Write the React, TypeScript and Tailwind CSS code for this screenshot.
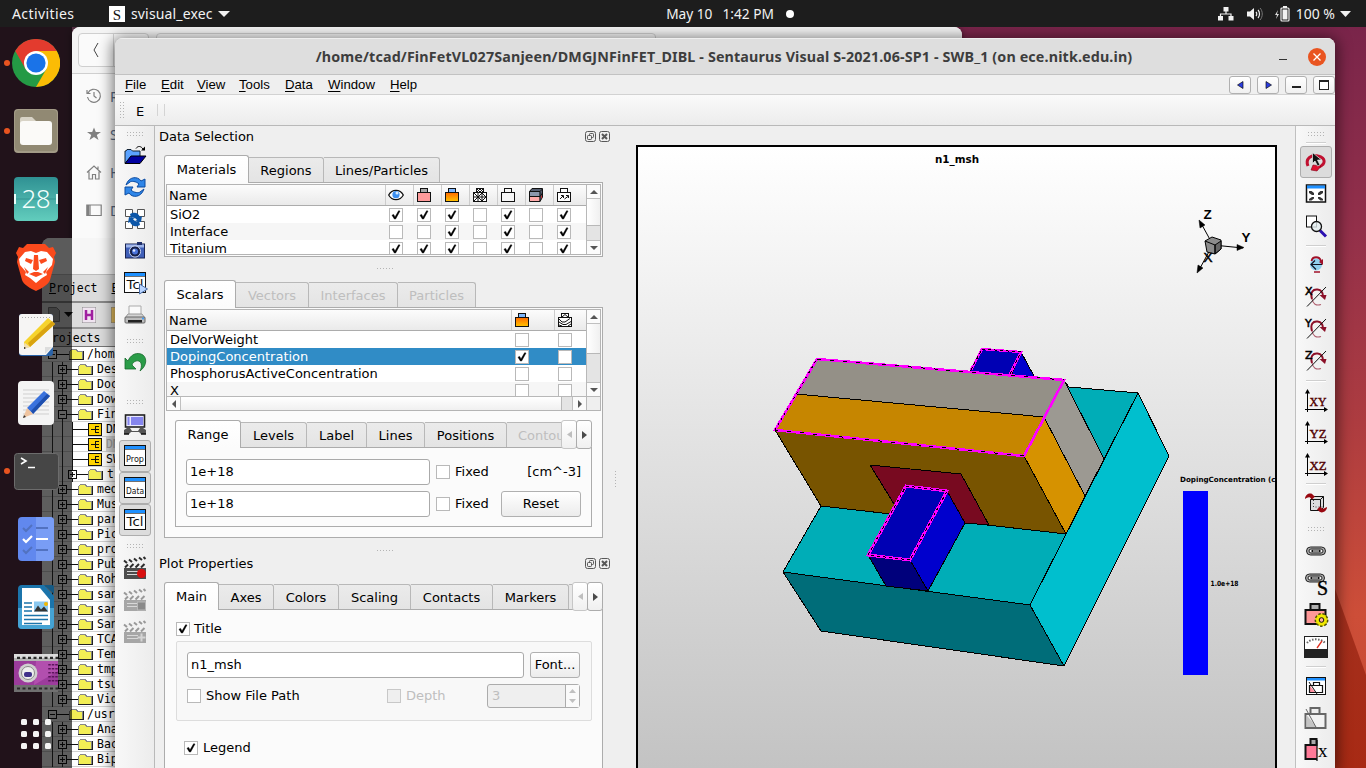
import React from "react";

type Kids = { children?: React.ReactNode };

/* ---------- shared widgets ---------- */

function Dots({ cols = 9, rows = 3 }: { cols?: number; rows?: number }) {
  const items: React.ReactNode[] = [];
  for (let r = 0; r < rows; r++)
    for (let c = 0; c < cols; c++)
      items.push(<rect key={r + "-" + c} x={c * 3} y={r * 3} width="1" height="1" fill="#b4b4b4" />);
  return (
    <svg width={cols * 3 - 2} height={rows * 3 - 2} className="block shrink-0" shapeRendering="crispEdges">
      {items}
    </svg>
  );
}

function Check({ on = false, disabled = false }: { on?: boolean; disabled?: boolean }) {
  return (
    <span
      className={
        "flex h-[14px] w-[14px] shrink-0 items-center justify-center border " +
        (disabled ? "border-[#c8c8c8] bg-[#efefef]" : "border-[#b9b9b9] bg-white")
      }
    >
      {on && (
        <svg width="12" height="12" viewBox="0 0 12 12" className="block">
          <path d="M2 6.2 3.6 5.4 5 8 8.6 1.8 10 2 5.6 10 4.4 10Z" fill="#000" stroke="#000" strokeWidth=".5" />
        </svg>
      )}
    </span>
  );
}

type Tab = { label: string; w: string };

function Tabs({ tabs, disabled = [], children }: { tabs: Tab[]; disabled?: string[] } & Kids) {
  return (
    <div className="relative z-10 flex h-[27px] items-start">
      {tabs.map((t, i) =>
        i === 0 ? (
          <div
            key={t.label}
            className={"flex h-[28px] shrink-0 items-center justify-center rounded-t-[3px] border border-b-0 border-[#acacac] bg-gradient-to-b from-white to-[#fbfbfb] " + t.w}
          >
            {t.label}
          </div>
        ) : (
          <div
            key={t.label}
            className={
              "mt-[2px] flex h-[25px] shrink-0 items-center justify-center overflow-hidden whitespace-nowrap rounded-tr-[3px] border border-b-0 border-l-0 border-[#b8b8b8] bg-gradient-to-b from-[#ebebeb] to-[#e4e4e4] pt-[2px] " +
              t.w +
              (disabled.includes(t.label) ? " text-[#bebebe]" : "")
            }
          >
            {t.label}
          </div>
        )
      )}
      {children}
    </div>
  );
}

function TabArrows() {
  return (
    <>
      <div className="flex h-[29px] w-[16px] shrink-0 items-center justify-center rounded-[3px] border border-[#c6c6c6] bg-gradient-to-b from-white to-[#f0f0f0]">
        <svg width="5" height="7"><path d="M5 0V7L0 3.5Z" fill="#bebebe" /></svg>
      </div>
      <div className="-ml-px flex h-[29px] w-[16px] shrink-0 items-center justify-center rounded-[3px] border border-[#acacac] bg-gradient-to-b from-white to-[#f0f0f0]">
        <svg width="5" height="8"><path d="M0 0V8L5 4Z" fill="#4a4a4a" /></svg>
      </div>
    </>
  );
}

function Field({ w, children }: { w: string } & Kids) {
  return (
    <div className={"flex h-[26px] shrink-0 items-center rounded-[3px] border border-[#aaaaaa] bg-white pl-[3px] " + w}>{children}</div>
  );
}

function Button({ w, children }: { w: string } & Kids) {
  return (
    <div className={"flex h-[26px] shrink-0 items-center justify-center rounded-[3px] border border-[#b0b0b0] bg-gradient-to-b from-white to-[#ececec] " + w}>
      {children}
    </div>
  );
}

function DockTitle({ children }: Kids) {
  return (
    <div className="flex h-[21px] shrink-0 items-center pl-[4px] pr-px">
      <span className="flex-1">{children}</span>
      <svg width="26" height="12" viewBox="0 0 26 12" fill="none" stroke="#585858">
        <rect x=".5" y=".5" width="10" height="10" rx="2" />
        <rect x="4.5" y="2.5" width="4" height="4" rx=".8" />
        <rect x="2.5" y="4.500" width="4" height="4" rx=".8" fill="#efefef" />
        <rect x="14.500" y=".5" width="10" height="10" rx="2" />
        <path d="M17 3l5 5M22 3l-5 5" strokeWidth="2" />
      </svg>
    </div>
  );
}

function Splitter({ h }: { h: string }) {
  return (
    <div className={"flex shrink-0 items-center justify-center pl-[2px] " + h}>
      <Dots cols={6} rows={1} />
    </div>
  );
}

/* ---------- material icons ---------- */

function EyeIcon() {
  return (
    <svg width="16" height="12" viewBox="0 0 16 12">
      <path d="M.7 6C4-.2 12-.2 15.300 6 12 12.200 4 12.200.7 6Z" fill="#fff" stroke="#111" strokeWidth="1.300" />
      <circle cx="8" cy="5.700" r="3.600" fill="#3c8ff0" />
      <circle cx="9" cy="4" r="1.500" fill="#d8ecff" />
    </svg>
  );
}

function Flask({ fill, top, mesh = "" }: { fill: string; top: string; mesh?: string }) {
  return (
    <svg width="16" height="16" viewBox="0 0 16 16">
      <defs>
        <linearGradient id="hot" x1="0" y1="0" x2="0" y2="1">
          <stop offset="0" stopColor="#ff6a00" />
          <stop offset="1" stopColor="#ffc400" />
        </linearGradient>
      </defs>
      <rect x="4.500" y="1.500" width="7" height="4" fill={top} stroke="#111" />
      <rect x="1.500" y="5.500" width="13" height="9" fill={fill} stroke="#111" />
      {mesh && <path d={mesh} fill="none" stroke="#111" />}
    </svg>
  );
}

const MESH = "M2 6l4 4 4-4 4 4M2 14l4-4 4 4 4-4M6 6v8M10 6v8M2 10h12M5 2l3 3 3-3M5 5l3-3 3 3";
const WAVES = "M2 7l3 3h3l5-3.500M2 10l4 2.500h3l5-3M2 13l3 1M11 14l3-2M5 5l3-2.500 3 2.500";
const ARROWS = "M4 12l3-3M5 8.500h2.500v2.500M8.500 12l4-3M10 8.500h2.500v2.500";

function SlabIcon() {
  return (
    <svg width="16" height="16" viewBox="0 0 16 16">
      <path d="M1.500 4.500 4 1.500H14.500V10L12 14.500H1.500Z" fill="#555e70" stroke="#111" />
      <path d="M1.500 4.500H12L14.500 2" fill="none" stroke="#111" />
      <rect x="2" y="5" width="9.500" height="4" fill="#8c98ad" />
      <rect x="2" y="10" width="9.500" height="4" fill="#ffabab" />
      <path d="M1.500 9.500H12L14.500 6M12 4.500v10" fill="none" stroke="#111" />
      <path d="M13 10l1-2v2l-1 2Z" fill="#e22" />
    </svg>
  );
}

/* ---------- data tables ---------- */

function VScroll({ thumb }: { thumb: string }) {
  return (
    <div className="flex w-[14px] shrink-0 flex-col border-l border-[#b8b8b8] bg-[#e4e4e4]">
      <div className="flex h-[14px] shrink-0 items-center justify-center border-b border-[#c0c0c0] bg-[#fbfbfb]">
        <svg width="8" height="4"><path d="M0 4H8L4 0Z" fill="#555" /></svg>
      </div>
      <div className={"shrink-0 border-b border-[#b8b8b8] bg-gradient-to-r from-white to-[#f0f0f0] " + thumb} />
      <div className="flex-1" />
      <div className="flex h-[14px] shrink-0 items-center justify-center border-t border-[#c0c0c0] bg-[#fbfbfb]">
        <svg width="8" height="4"><path d="M0 0H8L4 4Z" fill="#555" /></svg>
      </div>
    </div>
  );
}

const matIcons = [
  <EyeIcon />,
  <Flask fill="#ff9b9b" top="#a8a8a8" />,
  <Flask fill="url(#hot)" top="#7db7ff" />,
  <Flask fill="#fff" top="#fff" mesh={MESH} />,
  <Flask fill="#f6f6f6" top="#f6f6f6" />,
  <SlabIcon />,
  <Flask fill="#fff" top="#fff" mesh={ARROWS} />,
];

const matRows = [
  { name: "SiO2", v: [1, 1, 1, 0, 1, 0, 1] },
  { name: "Interface", v: [0, 0, 1, 0, 1, 0, 1] },
  { name: "Titanium", v: [1, 1, 1, 0, 1, 0, 1] },
];

function MaterialsTable() {
  return (
    <div className="flex h-full overflow-hidden border border-[#b4b4b4] bg-white">
      <div className="flex min-w-0 flex-1 flex-col">
        <div className="flex h-[21px] shrink-0 border-b border-[#acacac] bg-gradient-to-b from-[#fcfcfc] to-[#eaeaea]">
          <div className="flex flex-1 items-center pl-[2px] pt-[2px]">Name</div>
          {matIcons.map((ic, i) => (
            <div key={i} className="flex w-[28px] items-center border-l border-[#cccccc] pl-[2px]">
              {ic}
            </div>
          ))}
          <div className="w-[5px]" />
        </div>
        {matRows.map((r, i) => (
          <div key={r.name} className={"flex h-[17px] shrink-0 items-center " + (i % 2 ? "bg-[#f6f6f6]" : "bg-white")}>
            <div className="flex-1 pl-[3px]">{r.name}</div>
            {r.v.map((c, j) => (
              <div key={j} className="flex w-[28px] pl-[4px]">
                <Check on={!!c} />
              </div>
            ))}
            <div className="w-[5px]" />
          </div>
        ))}
      </div>
      <VScroll thumb="h-[27px]" />
    </div>
  );
}

const scalarRows = [
  { name: "DelVorWeight", bg: "bg-white", on: false },
  { name: "DopingConcentration", bg: "bg-[#308cc6] text-white", on: true },
  { name: "PhosphorusActiveConcentration", bg: "bg-white", on: false },
  { name: "X", bg: "bg-[#f6f6f6]", on: false },
];

function ScalarsTable() {
  return (
    <div className="flex h-[102px] shrink-0 flex-col border border-[#b4b4b4] bg-white">
      <div className="flex h-[86px] shrink-0">
        <div className="flex min-w-0 flex-1 flex-col overflow-hidden">
          <div className="flex h-[21px] shrink-0 border-b border-[#acacac] bg-gradient-to-b from-[#fcfcfc] to-[#eaeaea]">
            <div className="flex flex-1 items-center pl-[2px] pt-[2px]">Name</div>
            <div className="flex w-[43px] items-center border-l border-[#cccccc] pl-[2px]"><Flask fill="url(#hot)" top="#7db7ff" /></div>
            <div className="flex w-[32px] items-center border-l border-[#cccccc] pl-[2px]"><Flask fill="#fff" top="#fff" mesh={WAVES} /></div>
          </div>
          {scalarRows.map((r) => (
            <div key={r.name} className={"flex h-[17px] shrink-0 items-center " + r.bg}>
              <div className="flex-1 pl-[3px]">{r.name}</div>
              <div className="w-[43px] pl-[4px]"><Check on={r.on} /></div>
              <div className="w-[32px] pl-[4px]"><Check /></div>
            </div>
          ))}
        </div>
        <VScroll thumb="h-[30px]" />
      </div>
      <div className="flex h-[14px] shrink-0 border-t border-[#b8b8b8] bg-[#e4e4e4]">
        <div className="flex w-[14px] items-center justify-center border-r border-[#c0c0c0] bg-[#fbfbfb]">
          <svg width="4" height="8"><path d="M4 0V8L0 4Z" fill="#555" /></svg>
        </div>
        <div className="flex-1 border-r border-[#b8b8b8] bg-gradient-to-b from-white to-[#f0f0f0]" />
        <div className="w-[10px]" />
        <div className="flex w-[14px] items-center justify-center border-l border-[#c0c0c0] bg-[#fbfbfb]">
          <svg width="4" height="8"><path d="M0 0V8L4 4Z" fill="#555" /></svg>
        </div>
        <div className="w-[14px] border-l border-[#b8b8b8] bg-[#efefef]" />
      </div>
    </div>
  );
}

/* ---------- side toolbars ---------- */

function Tool({ active = false, children }: { active?: boolean } & Kids) {
  return (
    <div
      className={
        "flex h-8 w-8 shrink-0 items-center justify-center " +
        (active ? "rounded-[3px] border border-[#adadad] bg-[#dcdcdc]" : "")
      }
    >
      {children}
    </div>
  );
}

function Sep({ h }: { h: string }) {
  return (
    <div className={"flex w-full shrink-0 items-center justify-center " + h}>
      <div className="h-[2px] w-[20px] border-b border-white bg-[#cfcfcf]" />
    </div>
  );
}

function WinIcon({ label, play = false }: { label: string; play?: boolean }) {
  const long = label.length > 3;
  return (
    <svg width="26" height="24" viewBox="0 0 26 24">
      <rect x="2.500" y="1.500" width="21" height="20" fill="#fff" stroke="#111" />
      <rect x="3" y="2" width="20" height="3" fill="#1e90ff" />
      <path d="M3 5.500h20" stroke="#111" strokeWidth=".6" />
      <text
        x="13"
        y="17.500"
        textAnchor="middle"
        textLength={long ? 18 : 17}
        lengthAdjust="spacingAndGlyphs"
        fontFamily="DejaVu Sans"
        fontSize={long ? 9.5 : 12}
        fill="#111"
      >
        {label}
      </text>
      {play && <path d="M17.500 13v10l8-5Z" fill="#b8d4ff" stroke="#4a6ea8" />}
    </svg>
  );
}

function Clapper({ dim = false, kind }: { dim?: boolean; kind: string }) {
  const dark = dim ? "#999999" : "#2c2c2c";
  return (
    <svg width="24" height="24" viewBox="0 0 24 24">
      <path d="M1 4 22 0v5L2 9Z" fill="#f2f2f2" />
      <path d="M1 4.500l3 2.500M6 3.500l3 2.500M11 2.500l3 2.500M16 1.500l3 2.500M20.500 1l2 2" stroke={dark} strokeWidth="2" />
      <path d="M2 11.500l3-3M7 11.500l3.500-3.500M12.500 11.500 16 8M18 11.500 21.500 8" stroke={dark} strokeWidth="2" />
      <rect x="1" y="12" width="22" height="11" fill={dim ? "#a6a6a6" : "#4c4c4c"} />
      <path d="M4 15.500h11M4 18.500h11" stroke="#d8d8d8" />
      {kind === "rec" && <circle cx="18.500" cy="17.500" r="4.500" fill="#d90f0f" />}
      {kind === "stop" && <rect x="14.500" y="14" width="8" height="8" fill="#8a8a8a" stroke="#b8b8b8" />}
      {kind === "add" && <path d="M18.500 13.500v8M14.500 17.500h8" stroke="#d4d4d4" strokeWidth="2" />}
    </svg>
  );
}

function LeftToolbar() {
  return (
    <div className="flex w-[40px] shrink-0 flex-col items-center border-r border-[#b9b9b9] bg-gradient-to-r from-[#f8f8f8] to-[#ececec]">
      <div className="flex h-[13px] shrink-0 items-center pt-[3px]"><Dots cols={6} rows={2} /></div>
      <Tool>
        <svg width="24" height="24" viewBox="0 0 24 24">
          <path d="M2 20V8h1l1-1.500h4L9.500 8H17v5" fill="#5aa2ff" stroke="#123" />
          <path d="M2 20.500l6-7.500h15l-6 7.500Z" fill="#0000a0" stroke="#000" />
          <path d="M13 5.500c2-3 5-2.500 7 .5" fill="none" stroke="#000" />
          <path d="M22 3.500v4h-4Z" fill="#000" />
        </svg>
      </Tool>
      <Tool>
        <svg width="24" height="24" viewBox="0 0 24 24">
          <path d="M3 10C6 1 15 1 18 6l4-2v8h-8l2-3C13 6 8 6 7 7Z" fill="#2f86e8" stroke="#0b4aa0" />
          <path d="M21 14c-3 9-12 9-15 4l-4 2v-8h8l-2 3c3 3 8 3 9 2Z" fill="#2f86e8" stroke="#0b4aa0" />
        </svg>
      </Tool>
      <Tool>
        <svg width="24" height="24" viewBox="0 0 24 24">
          <path d="M2.500 2.500h7v7h-7ZM14.500 2.500h7v7h-7ZM2.500 14.500h7v7h-7ZM14.500 14.500h7v7h-7Z" fill="#fff" stroke="#555" />
          <path d="M7 7c5-3 9 0 10 3l2-1-1 6-6-1 2-1c-1-2-4-3-6-2Z" fill="#0c56a8" />
          <path d="M17 18c-5 3-9 0-10-3l-2 1 1-6 6 1-2 1c1 2 4 3 6 2Z" fill="#0c56a8" />
        </svg>
      </Tool>
      <Tool>
        <svg width="24" height="24" viewBox="0 0 24 24">
          <rect x="2.500" y="5" width="19" height="14" fill="#3f5fb8" stroke="#1a2450" />
          <rect x="3" y="5.500" width="18" height="3" fill="#9db4ea" />
          <rect x="14" y="3" width="5" height="3" fill="#20306a" />
          <circle cx="12" cy="12.500" r="5.600" fill="#16204a" stroke="#c8d4f4" />
          <circle cx="12" cy="12.500" r="3" fill="#4a72d8" />
          <circle cx="11" cy="11.500" r="1.300" fill="#dfe8ff" />
        </svg>
      </Tool>
      <Tool><WinIcon label="Tcl" play /></Tool>
      <Tool>
        <svg width="24" height="24" viewBox="0 0 24 24">
          <path d="M6 12V3h12v9" fill="#fafafa" stroke="#aaa" />
          <path d="M5 11h14l3 4H2Z" fill="#d4d4d4" stroke="#999" />
          <rect x="2" y="14" width="20" height="6" rx="1" fill="#bcbcbc" stroke="#666" />
          <rect x="5" y="17" width="14" height="2.500" fill="#222" />
          <circle cx="20" cy="15.500" r="1" fill="#39f" />
        </svg>
      </Tool>
      <div className="flex h-[15px] shrink-0 items-center pt-[5px]"><Dots cols={6} rows={2} /></div>
      <Tool>
        <svg width="26" height="24" viewBox="0 0 26 24">
          <path d="M3 8v11h11l-4-4c1-4 7-6 9-2 1 3 0 6-1 8 8-6 7-15 1-17C13 2 8 6 6 11Z" fill="#2a9c48" stroke="#15692b" strokeWidth=".8" strokeLinejoin="round" />
        </svg>
      </Tool>
      <div className="flex h-[30px] shrink-0 items-end pb-[4px]"><Dots cols={6} rows={2} /></div>
      <Tool>
        <svg width="24" height="24" viewBox="0 0 24 24">
          <rect x="2.500" y="3" width="19" height="12" fill="#e8e8ff" stroke="#222" strokeWidth="1.600" />
          <path d="M4.500 6h2M4.500 8h2M4.500 10h2M4.500 12h2M8 6h12M8 8h12M8 10h12M8 12h12" stroke="#2222dd" />
          <path d="M1 22v-4l3-2h3l2 3h6l2-3h3l3 2v4h-5l-2-2H8l-2 2Z" fill="#555" />
          <path d="M1 22h5M18 22h5" stroke="#111" strokeWidth="1.500" />
        </svg>
      </Tool>
      <Tool active><WinIcon label="Prop" /></Tool>
      <Tool active><WinIcon label="Data" /></Tool>
      <Tool active><WinIcon label="Tcl" /></Tool>
      <div className="flex h-[16px] shrink-0 items-center pt-[4px]"><Dots cols={6} rows={2} /></div>
      <Tool><Clapper kind="rec" /></Tool>
      <Tool><Clapper kind="stop" dim /></Tool>
      <Tool><Clapper kind="add" dim /></Tool>
    </div>
  );
}

function RotAxis({ axis }: { axis: string }) {
  return (
    <svg width="24" height="24" viewBox="0 0 24 24">
      <path d="M8 14C6 7 9 4 13.500 4.500c4 .5 5.500 3 5.500 7" fill="none" stroke="#8c1028" strokeWidth="2" />
      <path d="M8 14c1 5 4 7 9 5.500" fill="none" stroke="#b06070" strokeWidth="1.200" />
      <path d="M15.500 10h7l-1.500 5Z" fill="#8c1028" />
      <path d="M3 21.500 22 2" stroke="#111" />
      <text x="1" y="9.500" fontFamily="DejaVu Sans" fontSize="11" fill="#000" stroke="#000" strokeWidth=".5">{axis}</text>
    </svg>
  );
}

function Plane({ label }: { label: string }) {
  return (
    <svg width="26" height="26" viewBox="0 0 26 26">
      <path d="M4.500 24V3M2 21.500H24" stroke="#000" fill="none" />
      <path d="M2 5.500 4.500 1 7 5.500ZM21 19l4 2.500-4 2.500Z" fill="#000" />
      <text x="6.500" y="17.500" textLength="17" lengthAdjust="spacingAndGlyphs" fontFamily="Liberation Serif" fontSize="13" fill="#500000" stroke="#500000" strokeWidth=".4">{label}</text>
    </svg>
  );
}

function ChainShape({ y }: { y: number }) {
  return (
    <g transform={"translate(0 " + y + ")"} fill="none">
      <rect x="2.500" y="2" width="19" height="8" rx="4" stroke="#222" strokeWidth="1" fill="#aaa" />
      <rect x="5" y="4" width="14" height="4" rx="2" stroke="#222" strokeWidth="1" fill="#f4f4f4" />
      <path d="M7.500 6h9" stroke="#111" strokeWidth="2.400" />
      <path d="M9 6h6" stroke="#fff" />
    </g>
  );
}

function RightToolbar() {
  return (
    <div className="flex w-[40px] shrink-0 flex-col items-center border-l border-[#c0c0c0] bg-gradient-to-r from-[#f8f8f8] to-[#ececec]">
      <div className="flex h-[14px] shrink-0 items-center pt-[2px]"><Dots cols={6} rows={2} /></div>
      <Sep h="h-[6px]" />
      <Tool active>
        <svg width="24" height="24" viewBox="0 0 24 24">
          <path d="M4 16C1 9 7 4 14 6c8 2 8 8 1 11" fill="none" stroke="#c01030" strokeWidth="3" />
          <path d="M9 15l8 1-4 5-6-1Z" fill="#e01030" stroke="#800018" strokeWidth=".6" />
          <path d="M8.500 2.500v11l2.500-2.500 2.500 5 2.500-1-2.500-5h4Z" fill="#111" stroke="#eee" strokeWidth=".7" />
        </svg>
      </Tool>
      <Tool>
        <svg width="24" height="24" viewBox="0 0 24 24">
          <rect x="2.500" y="3" width="19" height="17" fill="#fff" stroke="#111" strokeWidth="1.500" />
          <rect x="3" y="3.500" width="18" height="3" fill="#1e90ff" />
          <path d="M5 9h2.500l2.500 2v2H8L5 11ZM19 9h-2.500L14 11v2h2l3-2ZM5 18.500h2.500l2.500-2v-1.500H8l-3 2ZM19 18.500h-2.500l-2.500-2v-1.500h2l3 2Z" fill="#333" />
        </svg>
      </Tool>
      <Tool>
        <svg width="24" height="24" viewBox="0 0 24 24">
          <rect x="2.500" y="2" width="10" height="11" fill="#fff" stroke="#111" />
          <path d="M16 16.500l6 6" stroke="#2a10b0" strokeWidth="3" />
          <circle cx="12.500" cy="12.500" r="5" fill="#e4eef0" fillOpacity=".8" stroke="#111" strokeWidth="1.300" />
        </svg>
      </Tool>
      <Sep h="h-[7px]" />
      <Tool>
        <svg width="24" height="24" viewBox="0 0 24 24">
          <circle cx="12" cy="11.500" r="6" fill="#90d0f0" />
          <path d="M7 11.500h11M11 7.500l-4 4 5 5" stroke="#112" fill="none" strokeWidth="1.200" />
          <path d="M7.500 8c1-5 8-5 9.500 0" stroke="#a01028" strokeWidth="1.800" fill="none" />
          <path d="M19 6v6l-4-3Z" fill="#a01028" />
          <path d="M10 19h6" stroke="#a01028" strokeWidth="1.500" />
        </svg>
      </Tool>
      <Tool><RotAxis axis="X" /></Tool>
      <Tool><RotAxis axis="Y" /></Tool>
      <Tool><RotAxis axis="Z" /></Tool>
      <Sep h="h-[8px]" />
      <Tool><Plane label="XY" /></Tool>
      <Tool><Plane label="YZ" /></Tool>
      <Tool><Plane label="XZ" /></Tool>
      <Sep h="h-[6px]" />
      <Tool>
        <svg width="24" height="24" viewBox="0 0 24 24">
          <path d="M6.500 8.500l3-3h10v11l-3 3h-10Z" fill="#ddd" stroke="#111" />
          <path d="M6.500 8.500h10v11M16.500 8.500l3-3" fill="none" stroke="#111" />
          <path d="M9.500 9v7h10" stroke="#444" strokeDasharray="1 2" fill="none" />
          <path d="M1 8c0-5 6-7 8-4l2 1.500-3 3-2-2C4 6 3 7 1 8ZM23 16c0 5-6 7-8 4l-2-1.500 3-3 2 2c2 .5 3-.5 5-1.500Z" fill="#980810" />
        </svg>
      </Tool>
      <div className="flex h-[16px] shrink-0 items-center pt-[4px]"><Dots cols={6} rows={2} /></div>
      <Tool><svg width="24" height="12" viewBox="0 0 24 12"><ChainShape y={0} /></svg></Tool>
      <Tool>
        <svg width="26" height="26" viewBox="0 0 26 26">
          <ChainShape y={2} />
          <text x="14" y="24.500" fontFamily="Liberation Serif" fontSize="20" fill="#000" stroke="#000" strokeWidth=".4">S</text>
        </svg>
      </Tool>
      <Tool>
        <svg width="26" height="26" viewBox="0 0 26 26">
          <rect x="7.500" y="2" width="9" height="6" fill="#b0b0b0" stroke="#111" strokeWidth="2" />
          <rect x="2.500" y="8" width="20" height="14" fill="#ff9898" stroke="#111" strokeWidth="2" />
          <circle cx="18.500" cy="18" r="6.200" fill="#f0e800" stroke="#555500" strokeWidth="1.500" strokeDasharray="2.500 1.700" />
          <circle cx="18.500" cy="18" r="2.300" fill="#ffb0a0" stroke="#111" />
        </svg>
      </Tool>
      <Tool>
        <svg width="26" height="24" viewBox="0 0 26 24">
          <rect x="1.500" y="1.500" width="23" height="21" fill="#fff" stroke="#222" />
          <rect x="1" y="14" width="24" height="9" fill="#222" />
          <path d="M4 8c4-5 14-5 18 0" fill="none" stroke="#666" strokeWidth="2" strokeDasharray="1.500 1.500" />
          <path d="M14 13l5-7" stroke="#e03020" strokeWidth="1.300" />
        </svg>
      </Tool>
      <Sep h="h-[7px]" />
      <Tool>
        <svg width="24" height="24" viewBox="0 0 24 24">
          <rect x="2.500" y="3.500" width="19" height="17" fill="#fff" stroke="#111" />
          <rect x="3" y="4" width="18" height="2.500" fill="#1e90ff" />
          <path d="M6 12l6 7H6Z" fill="#ff90a0" />
          <path d="M9.500 11.500V8.500h6v3M5.500 11.500h13v7h-13Z" stroke="#111" strokeWidth="1.200" fill="none" />
          <path d="M5 8l8 12" stroke="#111" />
        </svg>
      </Tool>
      <Tool>
        <svg width="26" height="26" viewBox="0 0 26 26">
          <rect x="7.500" y="3" width="9" height="6" fill="#eee" stroke="#666" strokeWidth="2" />
          <rect x="2.500" y="9" width="20" height="14" fill="#f2f2f2" stroke="#666" strokeWidth="2" />
          <path d="M3.500 10l10 12h-10Z" fill="#c4c4c4" />
          <path d="M3 4l11 20" stroke="#666" />
        </svg>
      </Tool>
      <Tool>
        <svg width="26" height="26" viewBox="0 0 26 26">
          <rect x="7.500" y="2" width="6" height="6" fill="#aaa" stroke="#111" strokeWidth="2" />
          <path d="M14 8H2.500v14H14" fill="#ff7a98" stroke="#111" strokeWidth="2" />
          <path d="M14 3v21" stroke="#111" strokeWidth="1.300" />
          <text x="15" y="19.500" fontFamily="Liberation Serif" fontSize="19" fill="#000">x</text>
        </svg>
      </Tool>
    </div>
  );
}

/* ---------- 3D plot ---------- */

function Plot() {
  return (
    <div className="mt-[19px] flex-1 overflow-hidden border-2 border-b-0 border-black bg-gradient-to-b from-white to-[#c3c3c3]">
      <svg width="637" height="621" viewBox="638 147 637 621" className="block">
        <text x="957" y="163" textAnchor="middle" textLength="44" lengthAdjust="spacingAndGlyphs" fontFamily="DejaVu Sans" fontSize="11" fontWeight="bold">n1_msh</text>

        <g stroke="#000" fill="#000">
          <path d="M1213 245 1202 225M1213 245 1243 248M1211 248 1199 270" />
          <path d="M1199 220l1 8 5-3ZM1244 247.500l-7-3v6ZM1197 273l1-8 5 3Z" strokeWidth=".5" />
          <path d="M1205 241l7-4 9 3v9l-6 5-8-2Z" fill="#8c8c8c" />
          <path d="M1215 245l6-4v8l-6 5Z" fill="#666" />
          <path d="M1205 241l10 4v9" fill="none" />
        </g>
        <g fontFamily="Liberation Sans" fontSize="13.500" fontWeight="bold">
          <text x="1203.500" y="218.500">Z</text>
          <text x="1241.500" y="241.500">Y</text>
          <text x="1203.500" y="262" fontWeight="normal" stroke="#000" strokeWidth=".5">X</text>
        </g>

        <g stroke="#000" strokeWidth="1" strokeLinejoin="round" shapeRendering="crispEdges">
          <path d="M1064 381 1069 387 1138 393 1104 459Z" fill="#00adb7" />
          <path d="M821 506 1066 534 1030 605 783 572Z" fill="#00adb7" />
          <path d="M783 572 1030 605 1064 666 821 631Z" fill="#006d79" />
          <path d="M1138 393 1169 456 1064 666 1030 605Z" fill="#00bfce" />
          <path d="M982 349 1021 352 1011 376 970 371Z" fill="#0000b4" />
          <path d="M1021 352 1034 376 1011 376Z" fill="#0000cd" />
          <path d="M817 359 1064 380 1044 417 796 394Z" fill="#949087" />
          <path d="M796 394 1044 417 1024 456 775 430Z" fill="#c68600" />
          <path d="M775 430 1024 456 1066 534 821 506Z" fill="#785400" />
          <path d="M1024 456 1044 417 1085 496 1066 534Z" fill="#d69200" />
          <path d="M1044 417 1064 380 1104 459 1085 496Z" fill="#9c9992" />
          <path d="M870 465 961 474 989 525 965 523 894 504Z" fill="#780a20" />
          <path d="M906 486 947 491 910 560 868 555Z" fill="#0000b4" />
          <path d="M947 491 965 523 928 591 910 560Z" fill="#0000cd" />
          <path d="M868 555 910 560 928 591 886 586Z" fill="#00007b" />
        </g>
        <g fill="none" stroke="#ff00ff" strokeWidth="2.600" shapeRendering="crispEdges">
          <path d="M817 359 1064 380 1024 456 775 430Z" />
          <path d="M971 370 982 349 1021 352 1010 374" strokeWidth="2.400" />
          <path d="M906 486 947 491 910 560 868 555Z" strokeWidth="3" />
        </g>
        <g fill="none" stroke="#000" strokeWidth="1" strokeDasharray="4 9" shapeRendering="crispEdges">
          <path d="M817 359 1064 380M1024 456 775 430" />
          <path d="M971 370 982 349 1021 352 1010 374" strokeDasharray="3 3" />
          <path d="M906 486 947 491 910 560 868 555Z" strokeDasharray="3 3" />
          <path d="M775 430 817 359" strokeDasharray="2 4" />
        </g>

        <text x="1180" y="482" textLength="103" lengthAdjust="spacingAndGlyphs" fontFamily="DejaVu Sans" fontSize="7.200" fontWeight="bold">DopingConcentration (cm</text>
        <rect x="1183" y="491" width="25" height="184" fill="#0000ff" />
        <text x="1210.500" y="586" textLength="28" lengthAdjust="spacingAndGlyphs" fontFamily="DejaVu Sans" fontSize="7.200" fontWeight="bold">1.0e+18</text>
      </svg>
    </div>
  );
}

/* ---------- docked panels ---------- */

function DataSelection() {
  return (
    <>
      <DockTitle>Data Selection</DockTitle>
      <div className="mt-2 flex flex-col pl-[9px] pr-[9px]">
        <Tabs tabs={[{ label: "Materials", w: "w-[85px]" }, { label: "Regions", w: "w-[75px]" }, { label: "Lines/Particles", w: "w-[116px]" }]} />
        <div className="h-[75px] shrink-0 border border-[#acacac] bg-[#fbfbfb] p-px">
          <MaterialsTable />
        </div>
      </div>
      <Splitter h="h-[23px]" />
      <div className="flex flex-col pl-[9px] pr-[9px]">
        <Tabs
          tabs={[{ label: "Scalars", w: "w-[72px]" }, { label: "Vectors", w: "w-[73px]" }, { label: "Interfaces", w: "w-[89px]" }, { label: "Particles", w: "w-[78px]" }]}
          disabled={["Vectors", "Interfaces", "Particles"]}
        />
        <div className="flex h-[231px] shrink-0 flex-col border border-[#acacac] bg-[#fbfbfb] p-px">
          <ScalarsTable />
          <div className="mt-[9px] flex flex-col pl-[9px] pr-[9px]">
            <Tabs
              tabs={[
                { label: "Range", w: "w-[66px]" },
                { label: "Levels", w: "w-[66px]" },
                { label: "Label", w: "w-[60px]" },
                { label: "Lines", w: "w-[58px]" },
                { label: "Positions", w: "w-[82px]" },
              ]}
            >
              <div className="mt-[2px] h-[25px] w-[54px] shrink-0 overflow-hidden whitespace-nowrap border-t border-[#b8b8b8] bg-[#e7e7e7] pl-[11px] pt-[5px] text-[#bebebe]">Contours</div>
              <TabArrows />
            </Tabs>
            <div className="flex h-[80px] flex-col gap-[6px] border border-[#acacac] bg-[#fbfbfb] pl-[10px] pr-[10px] pt-[11px]">
              <div className="flex items-center">
                <Field w="w-[244px]">1e+18</Field>
                <div className="ml-[6px] flex flex-1 items-center gap-[5px]"><Check />Fixed</div>
                <span>[cm^-3]</span>
              </div>
              <div className="flex items-center">
                <Field w="w-[244px]">1e+18</Field>
                <div className="ml-[6px] flex flex-1 items-center gap-[5px]"><Check />Fixed</div>
                <Button w="w-[80px]">Reset</Button>
              </div>
            </div>
          </div>
        </div>
      </div>
    </>
  );
}

function PlotProperties() {
  return (
    <>
      <DockTitle>Plot Properties</DockTitle>
      <div className="mt-2 flex min-h-0 flex-1 flex-col pl-[9px] pr-[9px]">
        <Tabs
          tabs={[
            { label: "Main", w: "w-[55px]" },
            { label: "Axes", w: "w-[55px]" },
            { label: "Colors", w: "w-[65px]" },
            { label: "Scaling", w: "w-[72px]" },
            { label: "Contacts", w: "w-[82px]" },
            { label: "Markers", w: "w-[76px]" },
          ]}
        >
          <div className="mt-[2px] h-[25px] w-[3px] shrink-0 border-t border-[#b8b8b8] bg-[#e7e7e7]" />
          <TabArrows />
        </Tabs>
        <div className="flex-1 border border-b-0 border-[#acacac] bg-[#fbfbfb] pl-[11px] pr-[10px] pt-[11px]">
          <div className="flex h-[16px] items-center gap-[4px]"><Check on />Title</div>
          <div className="mt-[4px] flex h-[80px] flex-col rounded-[2px] border border-[#dddddd] bg-[#f8f8f8] px-[10px] pt-[10px]">
            <div className="flex gap-[6px]">
              <Field w="w-[337px]">n1_msh</Field>
              <Button w="w-[50px]">Font...</Button>
            </div>
            <div className="mt-[5px] flex h-[26px] items-center">
              <div className="flex w-[200px] items-center gap-[5px]"><Check />Show File Path</div>
              <div className="flex w-[100px] items-center gap-[5px] text-[#bebebe]"><Check disabled />Depth</div>
              <div className="flex h-[24px] w-[93px] rounded-[3px] border border-[#acacac] bg-[#efefef] text-[#bebebe]">
                <span className="flex-1 pl-[4px] pt-[3px]">3</span>
                <span className="flex w-[14px] items-center justify-center border-l border-[#acacac] bg-[#fafafa]">
                  <svg width="7" height="14"><path d="M0 4H7L3.500 0ZM0 10H7L3.500 14Z" fill="#c0c0c0" /></svg>
                </span>
              </div>
            </div>
          </div>
          <div className="mt-[18px] flex h-[18px] items-center gap-[5px] pl-[8px]"><Check on />Legend</div>
        </div>
      </div>
    </>
  );
}

/* ---------- main window ---------- */

const menus = [
  ["File", "w-[36px]"],
  ["Edit", "w-[36px]"],
  ["View", "w-[42px]"],
  ["Tools", "w-[46px]"],
  ["Data", "w-[43px]"],
  ["Window", "w-[62px]"],
  ["Help", "w-[40px]"],
];

function MdiButton({ children }: Kids) {
  return (
    <div className="flex h-[18px] w-[22px] items-center justify-center rounded-[3px] border border-[#b0b0b0] bg-gradient-to-b from-white to-[#f0f0f0]">
      {children}
    </div>
  );
}

function MainWindow() {
  return (
    <div className="absolute left-[115px] top-[38px] z-30 flex h-[730px] w-[1220px] flex-col overflow-hidden rounded-t-[8px] bg-[#efefef] font-['DejaVu_Sans',sans-serif] text-[13px] leading-[16px] text-black shadow-[0_2px_14px_3px_rgba(0,0,0,0.5)]">
      <div className="flex h-[37px] shrink-0 items-center border-b border-[#c2c2c2] border-t border-t-[#eeeeee] bg-[#dedede]">
        <div className="w-[120px] shrink-0" />
        <div className="flex-1 whitespace-nowrap pr-[12px] text-center font-['Noto_Sans',sans-serif] text-[14.300px] font-bold tracking-[0.14px] text-[#3d3d3d]">
          /home/tcad/FinFetVL027Sanjeen/DMGJNFinFET_DIBL - Sentaurus Visual S-2021.06-SP1 - SWB_1 (on ece.nitk.edu.in)
        </div>
        <div className="flex w-[110px] shrink-0 items-center justify-end gap-[21px] pr-[9px]">
          <div className="mt-[5px] h-px w-[8px] bg-[#333]" />
          <svg width="18" height="18" viewBox="0 0 18 18">
            <circle cx="9" cy="9" r="9" fill="#e95420" />
            <path d="M5.500 5.500l7 7M12.500 5.500l-7 7" stroke="#fff" strokeWidth="1.300" />
          </svg>
        </div>
      </div>
      <div className="flex h-[20px] shrink-0 items-center border-b border-[#d2d2d2] bg-[#efefef] pl-[10px] font-['Liberation_Sans',sans-serif] text-[13.200px]">
        {menus.map(([m, w]) => (
          <div key={m} className={w}>
            <span className="underline underline-offset-2">{m[0]}</span>
            {m.slice(1)}
          </div>
        ))}
        <div className="flex flex-1 justify-end gap-[6px]">
          <MdiButton><svg width="7" height="8"><path d="M6 .5V7.500L.5 4Z" fill="#2a3ce0" stroke="#111" strokeWidth=".7" /></svg></MdiButton>
          <MdiButton><svg width="7" height="8"><path d="M1 .5V7.500L6.500 4Z" fill="#2a3ce0" stroke="#111" strokeWidth=".7" /></svg></MdiButton>
          <MdiButton><svg width="9" height="8"><rect y="5" width="9" height="2" fill="#222" /></svg></MdiButton>
          <MdiButton><svg width="10" height="10"><rect x=".5" y=".5" width="9" height="9" fill="#fff" stroke="#222" /><rect width="10" height="2" fill="#222" /></svg></MdiButton>
        </div>
      </div>
      <div className="flex h-[31px] shrink-0 items-center border-b border-[#b9b9b9] bg-gradient-to-b from-[#fafafa] to-[#ececec] pl-[5px]">
        <Dots cols={2} rows={6} />
        <span className="ml-[12px] pt-[3px]">E</span>
        <div className="ml-[13px] h-[12px] w-[8px] border-x border-[#d4d4d4]" />
      </div>
      <div className="flex min-h-0 flex-1">
        <LeftToolbar />
        <div className="flex w-[457px] shrink-0 flex-col">
          <DataSelection />
          <Splitter h="h-[15px] pt-[9px]" />
          <PlotProperties />
        </div>
        <div className="flex w-[24px] shrink-0 justify-start pl-[3px] pt-[345px]"><Dots cols={1} rows={6} /></div>
        <div className="flex w-[641px] shrink-0 flex-col"><Plot /></div>
        <div className="flex-1" />
        <RightToolbar />
      </div>
    </div>
  );
}

/* ---------- windows in the back ---------- */

function FilesWindow() {
  return (
    <div className="absolute left-[72px] top-[27px] z-0 flex h-[224px] w-[890px] flex-col rounded-t-[8px] bg-[#fafafa] shadow-[0_1px_6px_rgba(0,0,0,0.5)]">
      <div className="flex h-[47px] shrink-0 gap-[7px] rounded-t-[8px] border-b border-[#cfcfcf] bg-[#f4f4f4] pl-[6px] pt-[6px]">
        <div className="flex h-[34px] w-[71px] items-center rounded-[4px] border border-[#cfcfcf] bg-[#fafafa]">
          <div className="flex h-full w-[35px] items-center justify-center border-r border-[#d4d4d4]">
            <svg width="6" height="14" fill="none" stroke="#444"><path d="M5 0 1 7l4 7" /></svg>
          </div>
        </div>
        <div className="h-[34px] w-[500px] rounded-[4px] border border-[#cfcfcf] bg-[#f8f8f8]" />
      </div>
      <div className="flex flex-col pl-[14px] pt-[3px] font-['Noto_Sans',sans-serif] text-[14px] text-[#5c6e88]">
        {["R", "S", "H", "D"].map((label, i) => (
          <div key={i} className="flex h-[38px] items-center gap-[8px]">
            <svg width="16" height="16" viewBox="0 0 16 16" fill="none" stroke="#808080" strokeWidth="1.200">
              {i === 0 && <path d="M2 5a6.500 6.500 0 1 1-.5 4M1 2v3.500h3.500M8 4v4l2.500 2" />}
              {i === 1 && <path d="M8 1.500 9.800 6H15l-4.200 3 1.700 5L8 11l-4.500 3 1.700-5L1 6h5.200Z" fill="#808080" stroke="none" />}
              {i === 2 && <path d="M1 8.500 8 2l7 6.500M3 7.500V15h3.500v-4.500h3V15H13V7.500M12 5V2.500" />}
              {i === 3 && <path d="M.8 3h14.400v10.500H.8ZM1.500 3v10.500M2.500 3v10.500M4 3v10.500" />}
            </svg>
            <span>{label}</span>
          </div>
        ))}
      </div>
    </div>
  );
}

const tree: [string, string][] = [
  ["root", "/hom"], ["dir", "Des"], ["dir", "Doc"], ["dir", "Dow"], ["open", "Fin"],
  ["proj", "DM"], ["sel", "DM"], ["proj", "SW"], ["sub", "t"],
  ["dir", "med"], ["dir", "Mus"], ["dir", "par"], ["dir", "Pic"], ["dir", "pro"], ["dir", "Pub"], ["dir", "Roh"],
  ["dir", "san"], ["dir", "san"], ["dir", "San"], ["dir", "TCA"], ["dir", "Tem"], ["dir", "tmp"], ["dir", "tsu"], ["dir", "Vid"],
  ["root", "/usr"], ["dir", "Ana"], ["dir", "Bac"], ["dir", "Bip"],
];

function TreeGlyphs({ kind }: { kind: string }) {
  const root = kind === "root";
  const leaf = kind === "proj" || kind === "sel";
  const sub = kind === "sub";
  const bx = root ? 5 : sub ? 25 : 15;
  const fx = root ? 26 : leaf || sub ? 45 : 35;
  return (
    <svg width="66" height="15" viewBox="0 0 66 15" className="block shrink-0" shapeRendering="crispEdges">
      {!root && <path d="M9.500 0V15M19.500 0V15" stroke="#333" />}
      <path d={"M" + (leaf ? 29 : bx + 8) + " 7.500H" + fx} stroke="#111" />
      {(leaf || sub) && <path d="M29.500 0V15" stroke="#111" />}
      {!leaf && (
        <g stroke="#111">
          <rect x={bx + 0.5} y="3.500" width="8" height="8" fill="#fff" />
          <path d={"M" + (bx + 2) + " 7.500h5" + (root || kind === "open" ? "" : "M" + (bx + 4.5) + " 5v5")} />
        </g>
      )}
      {leaf ? (
        <>
          <rect x="45.500" y="1.500" width="13" height="12" fill="#ffd400" stroke="#111" />
          <path d="M48 7.500h4M52.500 4v7M52 4.500h4M52 7.500h4M52 10.500h4" stroke="#111" fill="none" />
        </>
      ) : (
        <>
          <path d={"M" + (fx + 0.5) + " 12.500V4.500l2-2h5l1 2h5v8Z"} fill="#f2ee55" stroke="#888" />
          <path d={"M" + fx + " 12.500h14.500V4"} fill="none" stroke="#222" />
        </>
      )}
    </svg>
  );
}

function BatchWindow() {
  return (
    <div className="absolute left-[42px] top-[238px] z-10 flex h-[530px] w-[100px] flex-col overflow-hidden rounded-tl-[8px] bg-white font-['DejaVu_Sans_Mono',monospace] text-[11.500px] leading-[15px] text-black">
      <div className="h-[37px] shrink-0 border-b border-[#bbb] bg-[#f6f6f6]" />
      <div className="flex h-[28px] shrink-0 items-center gap-[14px] border-b-2 border-[#888] bg-[#dcdcdc] pl-[7px] pt-px">
        <span><span className="underline">P</span>roject</span>
        <span className="underline">E</span>
      </div>
      <div className="flex h-[26px] shrink-0 items-center gap-[7px] border-b-2 border-[#999] bg-[#dcdcdc] pl-[5px]">
        <svg width="28" height="16"><path d="M1.500.5h8l3 3v11h-11Z" fill="#aaa" stroke="#777" /><path d="M17 5h9l-4.500 5Z" fill="#111" /></svg>
        <svg width="14" height="16"><rect width="14" height="16" fill="#f0e4f0" stroke="#888" /><path d="M4 3v10M10 3v10M4 8h6" stroke="#a020a0" strokeWidth="2.500" /></svg>
        <svg width="12" height="16" className="ml-[8px]"><rect width="12" height="16" fill="#e8c060" stroke="#888" /></svg>
      </div>
      <div className="flex h-[18px] shrink-0 items-center border-b border-[#777] bg-[#dcdcdc] pl-[3px] pt-px">Projects</div>
      {tree.map(([kind, name], i) => (
        <div key={i} className="flex h-[15px] shrink-0 border-b border-[#d2d2d2] pl-[1px]">
          <TreeGlyphs kind={kind} />
          <span
            className={
              "relative " +
              (kind === "root" ? "-left-[22px]" : kind === "sub" ? "-left-[2px]" : kind === "dir" || kind === "open" ? "-left-[12px]" : kind === "sel" ? "-left-[3px] bg-[#d8d8d8] text-[#a0a0a0]" : "-left-[3px]")
            }
          >
            {name}
          </span>
        </div>
      ))}
    </div>
  );
}

/* ---------- dock ---------- */

function DockItem({ h, running = false, children }: { h: string; running?: boolean } & Kids) {
  return (
    <div className={"flex w-full shrink-0 items-center " + h}>
      <div className="flex w-[12px] justify-center pl-[2px]">{running && <span className="h-[6px] w-[6px] rounded-full bg-[#e95420]" />}</div>
      <div className="flex w-[48px] justify-center">{children}</div>
    </div>
  );
}

function Launcher() {
  return (
    <div className="absolute left-0 top-[27px] z-20 flex h-[741px] w-[72px] flex-col bg-black/[0.63] pt-[2px]">
      <DockItem h="h-[68px]" running>
        <svg width="48" height="48" viewBox="0 0 48 48">
          <circle cx="24" cy="24" r="24" fill="#249a45" />
          <path d="M3.200 12A24 24 0 0 1 44.800 12H24Z" fill="#e33b2e" />
          <path d="M3.200 12 13.600 30 24 12Z" fill="#e33b2e" />
          <path d="M44.800 12A24 24 0 0 1 24 48L34.400 30 24 12Z" fill="#fbbc05" />
          <circle cx="24" cy="24" r="12" fill="#fff" />
          <circle cx="24" cy="24" r="9.600" fill="#1a73e8" />
        </svg>
      </DockItem>
      <DockItem h="h-[68px]" running>
        <svg width="44" height="44" viewBox="0 0 44 44">
          <rect width="44" height="44" rx="4" fill="#a39b87" />
          <rect x="1" y="1" width="42" height="41" rx="4" fill="#918973" />
          <path d="M6 12V10a2 2 0 0 1 2-2h10l4 4h13v4H6Z" fill="#d8d3c6" />
          <rect x="6" y="12" width="32" height="24" rx="3" fill="#fbfaf8" />
        </svg>
      </DockItem>
      <DockItem h="h-[68px]">
        <svg width="44" height="44" viewBox="0 0 44 44">
          <defs>
            <linearGradient id="cal" x1="0" y1="0" x2="0" y2="1"><stop offset="0" stopColor="#2f9193" /><stop offset="1" stopColor="#62cdbd" /></linearGradient>
          </defs>
          <rect width="44" height="44" rx="4" fill="url(#cal)" />
          <path d="M0 22h44" stroke="#2c8a8a" strokeWidth=".7" />
          <path d="M0 17h2v10H0ZM42 17h2v10h-2Z" fill="#e8fffa" />
          <text x="22" y="31" textAnchor="middle" fontFamily="Noto Sans" fontSize="26" textLength="29" fill="#f4fffc" fontWeight="300">28</text>
        </svg>
      </DockItem>
      <DockItem h="h-[68px]">
        <svg width="42" height="48" viewBox="0 0 42 48">
          <path d="M12 1h18l4 4 4-1 3 6-2 4 1 5-5 18c-1 4-9 9-14 11C16 46 8 41 7 37L2 19l1-5-2-4 3-6 4 1Z" fill="#fb4a1c" />
          <path d="M10 9l6-1 5 2 5-2 6 1 6 7-1 6-6 7 1 3-5 3-6 5-6-5-5-3 1-3-6-7-1-6Z" fill="#fff" />
          <path d="M11 15l7 2-2 4-6-3ZM31 15l-7 2 2 4 6-3ZM19 12h4l1 14-3 2-3-2ZM14 31l5-2h4l5 2-7 3ZM9 24l5 5-2 2Z" fill="#fb4a1c" />
          <path d="M33 24l-5 5 2 2Z" fill="#fb4a1c" />
        </svg>
      </DockItem>
      <DockItem h="h-[68px]">
        <svg width="44" height="44" viewBox="0 0 44 44">
          <rect x="5" y="1" width="34" height="42" rx="3" fill="#2a63a8" />
          <path d="M5 4a3 3 0 0 1 3-3h28a3 3 0 0 1 3 3v30l-7 8H8a3 3 0 0 1-3-3Z" fill="#f6f5f4" />
          <path d="M8 4.500h28" stroke="#aaa" strokeDasharray="1 2" />
          <path d="M11 35l-1-6L34 5l7 6-25 23Z" fill="#f6d32d" />
          <path d="M14 30 38 8l3 3-25 23Z" fill="#d9a310" />
          <path d="M10 36l1-6 5 4Z" fill="#f0dcb0" />
          <path d="M10 36v-2l2 1Z" fill="#111" />
          <path d="M31 41v-7h7" fill="#ddd" />
        </svg>
      </DockItem>
      <DockItem h="h-[68px]">
        <svg width="44" height="46" viewBox="0 0 44 46">
          <rect x="4" y="1" width="36" height="44" rx="4" fill="#f4f4f4" />
          <path d="M9 10h26M9 14h26M9 18h26M9 22h26M9 26h26M9 30h26M9 34h26" stroke="#cfcfcf" />
          <path d="M13 28 30 11l6 5-17 18Z" fill="#3a72dd" />
          <path d="M17 31 33 14l3 2-17 18Z" fill="#1e4fae" />
          <path d="M9 38l4-10 6 6Z" fill="#efc4a0" />
          <path d="M9 38l1-3 2 2Z" fill="#333" />
        </svg>
      </DockItem>
      <DockItem h="h-[68px]" running>
        <svg width="45" height="37" viewBox="0 0 45 37">
          <rect x=".5" y=".5" width="44" height="36" rx="3" fill="#464646" stroke="#6c6c6c" />
          <path d="M7 5l5 3-5 3" stroke="#fff" strokeWidth="1.600" fill="none" />
          <path d="M14 14.500h7" stroke="#fff" strokeWidth="1.500" />
        </svg>
      </DockItem>
      <DockItem h="h-[68px]">
        <svg width="38" height="46" viewBox="0 0 38 46">
          <rect x="1" y="1" width="36" height="44" rx="4" fill="#6188ee" />
          <path d="M19 1h14a4 4 0 0 1 4 4v36a4 4 0 0 1-4 4H19Z" fill="#799df5" />
          <path d="M19 12h12M19 34h12M6 12l3 3 6-6M6 34l3 3 6-6" stroke="#5272c0" strokeWidth="2" fill="none" />
          <path d="M19 23h12M6 23l3 3 6-6" stroke="#fff" strokeWidth="2.200" fill="none" />
        </svg>
      </DockItem>
      <DockItem h="h-[68px]">
        <svg width="38" height="46" viewBox="0 0 38 46">
          <path d="M5 1h22l10 11v29a4 4 0 0 1-4 4H5a4 4 0 0 1-4-4V5a4 4 0 0 1 4-4Z" fill="#1b74ab" />
          <path d="M1 24h36v17a4 4 0 0 1-4 4H5a4 4 0 0 1-4-4Z" fill="#45a3d4" />
          <path d="M5 4h18l10 12v25H5Z" fill="#fff" />
          <path d="M27 1h8a2 2 0 0 1 2 2v7Z" fill="#155a85" />
          <path d="M7 19h8M7 23h8M7 27h8M7 31.500h24M7 35.500h24M7 39.500h18" stroke="#1b74ab" strokeWidth="1.600" />
          <rect x="17" y="17.500" width="14" height="10" fill="#8bc8ef" />
          <path d="M17 27.500l4-6 3 4 3-3 4 5Z" fill="#333" />
          <circle cx="29" cy="20" r="2" fill="#f5b800" />
        </svg>
      </DockItem>
      <DockItem h="h-[64px]">
        <svg width="44" height="38" viewBox="0 0 44 38">
          <rect width="44" height="38" fill="#b4b4b4" />
          <rect width="44" height="4" fill="#dcdcdc" />
          <rect y="31" width="44" height="7" fill="#707070" />
          <rect y="7" width="44" height="24" fill="#9c3c9c" />
          <path d="M22 7h22v10L20 31Z" fill="#c25bbb" opacity=".6" />
          <path d="M3 3.800h41M3 34.500h41" stroke="#2a2a2a" strokeWidth="2.200" strokeDasharray="3 2.500" />
          <path d="M35.500 10v18M39 10v18M42.500 10v18" stroke="#5c155c" strokeDasharray="1.500 2.500" strokeWidth="2.500" />
          <circle cx="14" cy="19" r="9.500" fill="#cfcfcf" />
          <circle cx="14" cy="19" r="6.500" fill="#efefef" stroke="#888" />
          <rect x="10" y="18" width="8" height="5" rx="2" fill="#40308a" />
        </svg>
      </DockItem>
      <DockItem h="h-[58px]">
        <svg width="30" height="30" viewBox="0 0 30 30" fill="#f4f4f4">
          {[0, 12, 24].map((y) => [0, 12, 24].map((x) => <rect key={x + "," + y} x={x} y={y} width="6" height="6" rx="1.500" />))}
        </svg>
      </DockItem>
    </div>
  );
}

/* ---------- top bar ---------- */

function TopBar() {
  return (
    <div className="relative z-40 flex h-[27px] items-center bg-[#1d1d1d] font-['Noto_Sans',sans-serif] text-[14px] leading-[18px] text-[#f2f2f2]">
      <div className="flex w-[500px] items-center pl-[12px]">
        <span className="w-[97px] text-[14px] tracking-[0.4px]">Activities</span>
        <svg width="16" height="16" viewBox="0 0 16 16">
          <rect width="16" height="16" fill="#fff" />
          <text x="8" y="13.500" textAnchor="middle" fontFamily="Liberation Serif" fontSize="15" fill="#111">S</text>
        </svg>
        <span className="ml-[6px] text-[14px] tracking-[0.15px]">svisual_exec</span>
        <svg width="12" height="6" className="ml-[5px]"><path d="M0 0H12L6 6Z" fill="#f2f2f2" /></svg>
      </div>
      <div className="flex flex-1 items-center justify-center gap-[10px] pr-[6px] text-[13.700px]">
        <span>May 10</span>
        <span>1:42 PM</span>
        <span className="ml-[2px] h-[8px] w-[8px] rounded-full bg-white" />
      </div>
      <div className="flex w-[400px] items-center justify-end pr-[15px]">
        <svg width="16" height="14" viewBox="0 0 16 14" fill="#f2f2f2">
          <path d="M5.500 0h5v4.500h-5ZM0 9h5v4.500H0ZM10.500 9h5v4.500h-5Z" />
          <path d="M8 4v3M2.500 9V7h10.500v2" stroke="#f2f2f2" fill="none" strokeWidth="1.200" />
        </svg>
        <svg width="16" height="14" viewBox="0 0 16 14" className="ml-[13px]">
          <path d="M0 4.500h3L7 1v12L3 9.500H0Z" fill="#f2f2f2" />
          <path d="M9 5c1 1 1 3 0 4M11 3c2 2 2 6 0 8" stroke="#f2f2f2" fill="none" strokeWidth="1.200" />
          <path d="M13 1c3 3 3 9 0 12" stroke="#777" fill="none" />
        </svg>
        <svg width="15" height="16" viewBox="0 0 15 16" className="ml-[12px]">
          <path d="M3 4 0 9h2l-1 4 3-5H2Z" fill="#ddd" />
          <rect x="6" y="2" width="8" height="13" rx="1" fill="none" stroke="#f2f2f2" strokeWidth="1.200" />
          <path d="M8 0h4v2H8ZM7.500 3.500h5v10h-5Z" fill="#f2f2f2" />
        </svg>
        <span className="ml-[6px]">100 %</span>
        <svg width="11" height="6" className="ml-[5px]"><path d="M0 0H11L5.500 6Z" fill="#f2f2f2" /></svg>
      </div>
    </div>
  );
}

export default function App() {
  return (
    <div className="relative h-[768px] w-[1366px] overflow-hidden bg-[#593348]">
      <svg width="1366" height="768" viewBox="0 0 1366 768" className="absolute left-0 top-0">
        <defs>
          <linearGradient id="wall" x1="0" y1="0" x2="0" y2="1">
            <stop offset="0" stopColor="#76234a" />
            <stop offset=".3" stopColor="#93304a" />
            <stop offset=".55" stopColor="#ad3c40" />
            <stop offset=".8" stopColor="#cd4e38" />
            <stop offset="1" stopColor="#c44932" />
          </linearGradient>
          <linearGradient id="fold" x1="0" y1="0" x2="0" y2="1">
            <stop offset="0" stopColor="#a2301f" />
            <stop offset="1" stopColor="#a82a14" />
          </linearGradient>
        </defs>
        <rect x="600" width="766" height="768" fill="url(#wall)" />
        <path d="M1330 575 1366 675V768H1330Z" fill="url(#fold)" />
      </svg>
      <TopBar />
      <FilesWindow />
      <BatchWindow />
      <Launcher />
      <MainWindow />
    </div>
  );
}
